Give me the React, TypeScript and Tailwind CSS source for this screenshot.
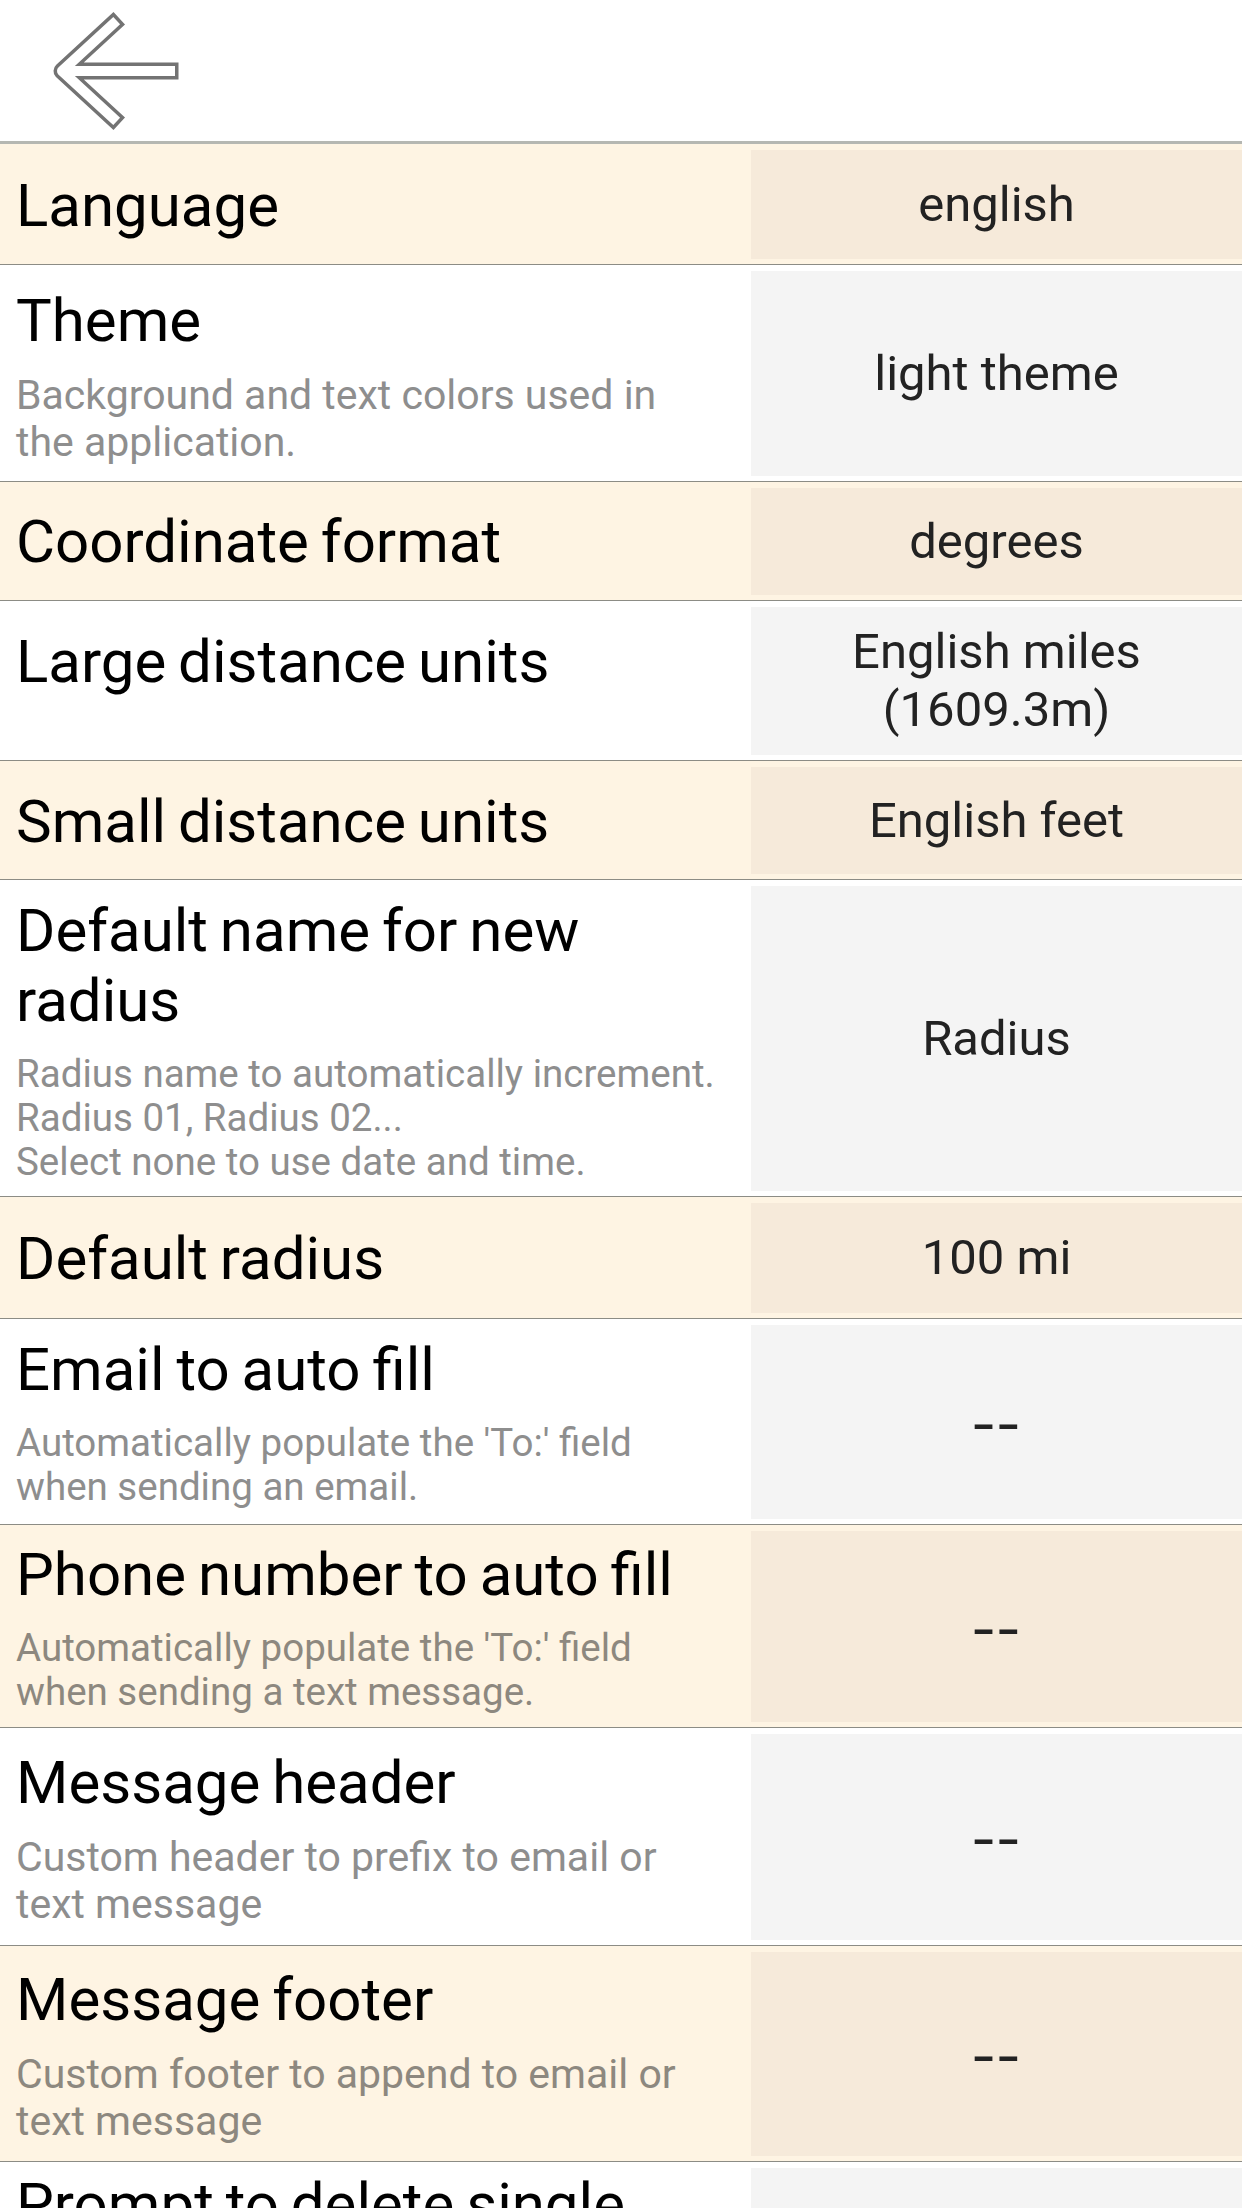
import React from 'react';

interface Setting {
  title: string[];
  sub?: string[];
  small?: boolean;
  value: string[];
  h: string;
  pt: string;
}

const settings: Setting[] = [
  { title: ['Language'], value: ['english'], h: 'h-[121px]', pt: 'pt-[27px]' },
  {
    title: ['Theme'],
    sub: ['Background and text colors used in', 'the application.'],
    value: ['light theme'],
    h: 'h-[217px]',
    pt: 'pt-[21px]',
  },
  { title: ['Coordinate format'], value: ['degrees'], h: 'h-[119px]', pt: 'pt-[25px]' },
  { title: ['Large distance units'], value: ['English miles', '(1609.3m)'], h: 'h-[160px]', pt: 'pt-[26px]' },
  { title: ['Small distance units'], value: ['English feet'], h: 'h-[119px]', pt: 'pt-[26px]' },
  {
    title: ['Default name for new', 'radius'],
    sub: ['Radius name to automatically increment.', 'Radius 01, Radius 02...', 'Select none to use date and time.'],
    small: true,
    value: ['Radius'],
    h: 'h-[317px]',
    pt: 'pt-[16px]',
  },
  { title: ['Default radius'], value: ['100 mi'], h: 'h-[122px]', pt: 'pt-[27px]' },
  {
    title: ['Email to auto fill'],
    sub: ["Automatically populate the 'To:' field", 'when sending an email.'],
    small: true,
    value: ['--'],
    h: 'h-[206px]',
    pt: 'pt-[16px]',
  },
  {
    title: ['Phone number to auto fill'],
    sub: ["Automatically populate the 'To:' field", 'when sending a text message.'],
    small: true,
    value: ['--'],
    h: 'h-[203px]',
    pt: 'pt-[15px]',
  },
  {
    title: ['Message header'],
    sub: ['Custom header to prefix to email or', 'text message'],
    value: ['--'],
    h: 'h-[218px]',
    pt: 'pt-[20px]',
  },
  {
    title: ['Message footer'],
    sub: ['Custom footer to append to email or', 'text message'],
    value: ['--'],
    h: 'h-[216px]',
    pt: 'pt-[19px]',
  },
];

const titleCls = 'text-[60px] leading-[70px] [word-spacing:-3px] text-black whitespace-nowrap';

function BackArrow() {
  // outline arrow: gray stroke under a thinner white stroke
  const d = 'M68 16 L17 63 L68 110 M26 63 L125 63';
  return (
    <svg width="140" height="130" viewBox="0 0 140 130" className="ml-[45px] blur-[0.6px]">
      <g fill="none" strokeLinejoin="round" strokeLinecap="square">
        <path d={d} stroke="#737373" strokeWidth="17" />
        <path d={d} stroke="#ffffff" strokeWidth="10" />
      </g>
    </svg>
  );
}

function Row({ s, cream }: { s: Setting; cream: boolean }) {
  return (
    <div className={`flex ${s.h} border-b border-[#8c8c85] ${cream ? 'bg-[#fef4e3]' : 'bg-white'}`}>
      <div className={`flex-1 flex flex-col pl-[16px] min-w-0 ${s.pt}`}>
        <div className={titleCls}>
          {s.title.map((t) => (
            <div key={t}>{t}</div>
          ))}
        </div>
        {s.sub && (
          <div
            className={`mt-[16px] whitespace-nowrap ${
              s.small ? 'text-[38.5px] leading-[44px]' : 'text-[41px] leading-[47px]'
            } ${cream ? 'text-[#8d887f]' : 'text-[#8e8e8e]'}`}
          >
            {s.sub.map((t) => (
              <div key={t}>{t}</div>
            ))}
          </div>
        )}
      </div>
      <div
        className={`w-[491px] mt-[6px] mb-[5px] flex flex-col items-center justify-center text-center text-[49px] leading-[58px] text-[#222222] ${
          cream ? 'bg-[#f6eada]' : 'bg-[#f4f4f4]'
        }`}
      >
        {s.value.map((v) =>
          v === '--' ? (
            <span key={v} className="inline-block scale-x-[1.4] tracking-[1px] translate-y-[3px] font-medium">
              {v}
            </span>
          ) : (
            <div key={v}>{v}</div>
          )
        )}
      </div>
    </div>
  );
}

export default function App() {
  return (
    <div className="w-[1242px] h-[2208px] overflow-hidden bg-white font-['Roboto',sans-serif]">
      <header className="h-[144px] pt-[8px] border-b-[3px] border-[#b5b7b2] bg-white">
        <BackArrow />
      </header>
      {settings.map((s, i) => (
        <Row key={s.title[0]} s={s} cream={i % 2 === 0} />
      ))}
      <div className="flex h-[400px] bg-white">
        <div className="flex-1 pl-[16px] pt-[8px]">
          <div className={titleCls}>
            <div>Prompt to delete single</div>
            <div>radius</div>
          </div>
        </div>
        <div className="w-[491px] mt-[6px] bg-[#f4f4f4]" />
      </div>
    </div>
  );
}
